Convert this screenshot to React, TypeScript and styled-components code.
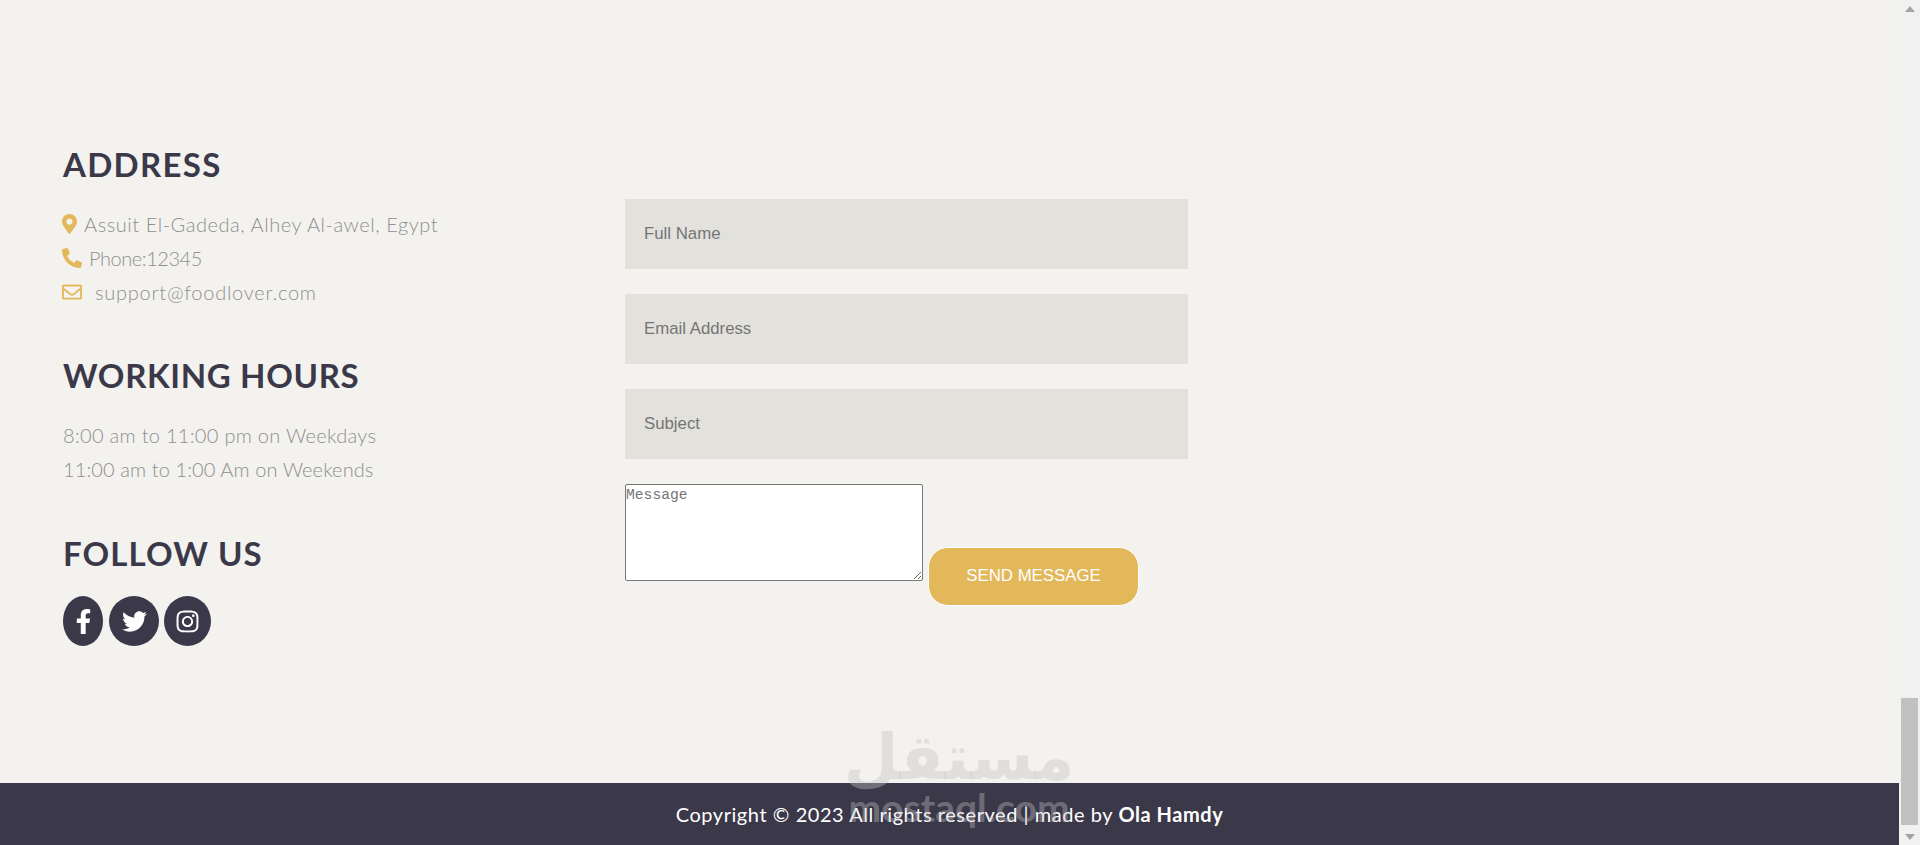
import React from "react";
import styled, { createGlobalStyle } from "styled-components";
import {
  FaFacebookF,
  FaInstagram,
  FaMapMarkerAlt,
  FaPhoneAlt,
  FaRegEnvelope,
  FaTwitter,
} from "react-icons/fa";

const GlobalStyle = createGlobalStyle`
  html, body {
    margin: 0;
    height: 100%;
    overflow: hidden;
  }
  * {
    box-sizing: border-box;
  }
`;

const Page = styled.div`
  display: flex;
  height: 845px;
  background: #f3f2ee;
  font-family: "Lato", "Open Sans", sans-serif;
`;

const Main = styled.div`
  position: relative;
  flex: 1;
  display: flex;
  flex-direction: column;
`;

const Contact = styled.section`
  flex: 1;
  display: grid;
  grid-template-columns: 562px 563px;
  padding: 144px 0 0 63px;
`;

const Info = styled.div``;

const Heading = styled.h3<{ $gap?: number; $spacing: number }>`
  margin: ${(p) => p.$gap || 0}px 0 23px;
  height: 40px;
  line-height: 40px;
  font-size: 33px;
  font-weight: 700;
  letter-spacing: ${(p) => p.$spacing}px;
  color: #3a3849;
`;

const Row = styled.div<{ $spacing: number }>`
  display: flex;
  align-items: center;
  height: 34px;
  font-size: 20px;
  font-weight: 300;
  letter-spacing: ${(p) => p.$spacing}px;
  color: #8f8f8f;
`;

const RowIcon = styled.span<{ $width: number; $glyph?: number }>`
  display: inline-flex;
  width: ${(p) => p.$width}px;
  margin-left: -1px;
  font-size: 20px;
  color: #e3b85b;
  svg {
    flex: none;
    width: ${(p) => p.$glyph || 20}px;
  }
`;

const Socials = styled.div`
  display: flex;
  gap: 5px;
`;

const Social = styled.a<{ $width: number; $gap?: number }>`
  display: flex;
  align-items: center;
  justify-content: center;
  width: ${(p) => p.$width}px;
  height: 50px;
  margin-left: ${(p) => p.$gap || 0}px;
  border-radius: 50%;
  font-size: 25px;
  color: #ffffff;
  background: #3a3849;
`;

const Form = styled.form`
  display: flex;
  flex-direction: column;
  padding-top: 55px;
`;

const Field = styled.input`
  display: block;
  width: 563px;
  height: 70px;
  margin-bottom: 25px;
  padding: 0 19px;
  border: none;
  outline: none;
  font-family: "Liberation Sans", Arial, sans-serif;
  font-size: 16.8px;
  background: #e2e1dc;
`;

const MessageRow = styled.div`
  display: flex;
  align-items: flex-start;
  gap: 5px;
`;

const Message = styled.textarea`
  display: block;
  width: 298px;
  height: 97px;
  padding: 2px 0 0;
  margin: 0;
  border: 1px solid #767676;
  border-radius: 2px;
  font-family: "Liberation Mono", monospace;
  font-size: 14.67px;
  background: #ffffff;
`;

const SendButton = styled.button`
  width: 211px;
  height: 59px;
  margin-top: 63px;
  padding: 0 0 2px;
  border: 1px solid #ffffff;
  border-radius: 20px;
  font-family: "Liberation Sans", Arial, sans-serif;
  font-size: 16.8px;
  color: #ffffff;
  background: #e3b85b;
`;

const Footer = styled.footer`
  height: 62px;
  display: flex;
  align-items: center;
  justify-content: center;
  font-size: 20px;
  letter-spacing: 0.55px;
  color: #ffffff;
  background: #3a3849;
  b {
    font-weight: 700;
  }
`;

const Watermark = styled.div`
  position: absolute;
  left: 848px;
  top: 717px;
  width: 222px;
  display: flex;
  flex-direction: column;
  align-items: center;
  color: rgba(195, 195, 195, 0.4);
  pointer-events: none;
`;

const WatermarkArabic = styled.span`
  height: 70px;
  line-height: 82px;
  font-family: "DejaVu Sans", sans-serif;
  font-size: 63px;
  font-weight: 700;
`;

const WatermarkLatin = styled.span`
  height: 40px;
  line-height: 40px;
  font-size: 39px;
  font-weight: 700;
`;

const Scrollbar = styled.div`
  width: 21px;
  display: flex;
  flex-direction: column;
  align-items: center;
  background: #f1f1f1;
`;

const Arrow = styled.svg`
  display: block;
  width: 10px;
  height: 6px;
  fill: #a3a3a3;
`;

const ArrowSlot = styled.div`
  height: 17px;
  display: flex;
  align-items: center;
  justify-content: center;
`;

const Track = styled.div`
  flex: 1;
  width: 17px;
  display: flex;
  flex-direction: column;
  justify-content: flex-end;
`;

const Thumb = styled.div`
  height: 127px;
  margin-bottom: 3px;
  background: #c1c1c1;
`;

const App: React.FC = () => {
  return (
    <Page>
      <GlobalStyle />
      <Main>
        <Contact>
          <Info>
            <Heading $spacing={1.3}>ADDRESS</Heading>
            <Row $spacing={0.55}>
              <RowIcon $width={22} $glyph={15}>
                <FaMapMarkerAlt />
              </RowIcon>
              Assuit El-Gadeda, Alhey Al-awel, Egypt
            </Row>
            <Row $spacing={-0.45}>
              <RowIcon $width={27}>
                <FaPhoneAlt />
              </RowIcon>
              Phone:12345
            </Row>
            <Row $spacing={0.75}>
              <RowIcon $width={33}>
                <FaRegEnvelope />
              </RowIcon>
              support@foodlover.com
            </Row>
            <Heading $gap={46} $spacing={0.65}>
              WORKING HOURS
            </Heading>
            <Row $spacing={0.3}>8:00 am to 11:00 pm on Weekdays</Row>
            <Row $spacing={0.1}>11:00 am to 1:00 Am on Weekends</Row>
            <Heading $gap={47} $spacing={1.1}>
              FOLLOW US
            </Heading>
            <Socials>
              <Social $width={40}>
                <FaFacebookF />
              </Social>
              <Social $width={50} $gap={1}>
                <FaTwitter />
              </Social>
              <Social $width={47}>
                <FaInstagram />
              </Social>
            </Socials>
          </Info>
          <Form>
            <Field type="text" placeholder="Full Name" />
            <Field type="email" placeholder="Email Address" />
            <Field type="text" placeholder="Subject" />
            <MessageRow>
              <Message placeholder="Message" />
              <SendButton type="button">SEND MESSAGE</SendButton>
            </MessageRow>
          </Form>
        </Contact>
        <Footer>
          <span>
            Copyright © 2023 All rights reserved | made by <b>Ola Hamdy</b>
          </span>
        </Footer>
        <Watermark>
          <WatermarkArabic>مستقل</WatermarkArabic>
          <WatermarkLatin>mostaql.com</WatermarkLatin>
        </Watermark>
      </Main>
      <Scrollbar>
        <ArrowSlot>
          <Arrow viewBox="0 0 10 6">
            <path d="M5 0 L10 6 L0 6 Z" />
          </Arrow>
        </ArrowSlot>
        <Track>
          <Thumb />
        </Track>
        <ArrowSlot>
          <Arrow viewBox="0 0 10 6">
            <path d="M0 0 L10 0 L5 6 Z" />
          </Arrow>
        </ArrowSlot>
      </Scrollbar>
    </Page>
  );
};

export default App;
